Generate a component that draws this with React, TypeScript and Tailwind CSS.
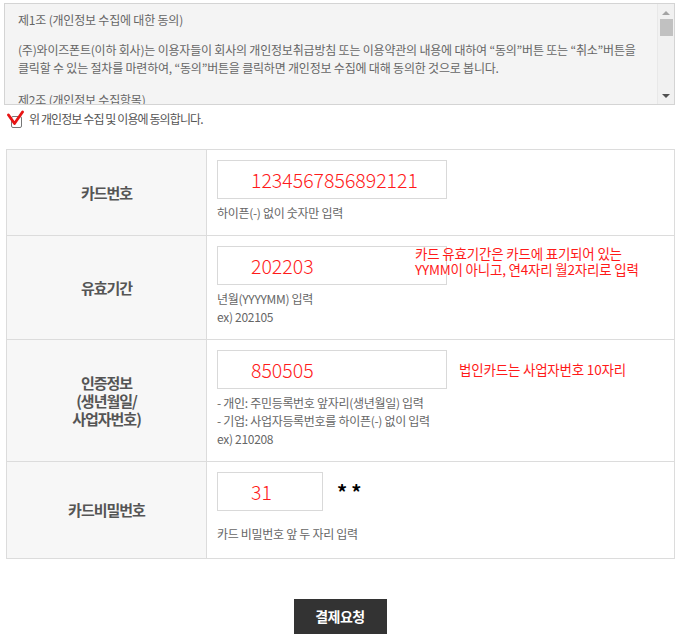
import React from "react";

const font = {
  fontFamily: '"Noto Sans CJK KR", "Noto Sans", sans-serif',
};

const rows = [
  {
    label: ["카드번호"],
    value: "1234567856892121",
    inputW: "w-[230px]",
    help: ["하이픈(-) 없이 숫자만 입력"],
    h: "h-[86px]",
  },
  {
    label: ["유효기간"],
    value: "202203",
    inputW: "w-[230px]",
    help: ["년월(YYYYMM) 입력", "ex) 202105"],
    h: "h-[104px]",
  },
  {
    label: ["인증정보", "(생년월일/", "사업자번호)"],
    value: "850505",
    inputW: "w-[230px]",
    help: [
      "- 개인: 주민등록번호 앞자리(생년월일) 입력",
      "- 기업: 사업자등록번호를 하이픈(-) 없이 입력",
      "ex) 210208",
    ],
    h: "h-[122px]",
  },
  {
    label: ["카드비밀번호"],
    value: "31",
    inputW: "w-[106px]",
    help: ["카드 비밀번호 앞 두 자리 입력"],
    h: "h-[97px]",
  },
];

const App = () => {
  return (
    <div className="w-[685px] h-[643px] bg-white" style={font}>
      {/* agreement box */}
      <div className="pt-[3px] pl-[4px]">
        <div className="w-[671px] h-[102px] border border-[#d4d4d4] bg-[#f4f4f4] flex overflow-hidden">
          <div className="flex-1 pl-[13px] pt-[7px] text-[12px] leading-[18px] text-[#666] tracking-[-0.2px]">
            <p>제1조 (개인정보 수집에 대한 동의)</p>
            <p className="mt-[12px]">
              (주)와이즈폰트(이하 회사)는 이용자들이 회사의 개인정보취급방침 또는 이용약관의 내용에 대하여 “동의”버튼 또는 “취소”버튼을
              <br />
              클릭할 수 있는 절차를 마련하여, “동의”버튼을 클릭하면 개인정보 수집에 대해 동의한 것으로 봅니다.
            </p>
            <p className="mt-[14px]">제2조 (개인정보 수집항목)</p>
          </div>
          <div className="w-[17px] bg-[#f1f1f1] border-l border-[#e8e8e8] flex flex-col items-center">
            <div className="mt-[7px] w-0 h-0 border-l-[4px] border-r-[4px] border-b-[4px] border-l-transparent border-r-transparent border-b-[#a3a3a3]" />
            <div className="mt-[4px] w-[13px] h-[17px] bg-[#c1c1c1]" />
            <div className="mt-auto mb-[6px] w-0 h-0 border-l-[4px] border-r-[4px] border-t-[4px] border-l-transparent border-r-transparent border-t-[#505050]" />
          </div>
        </div>
      </div>

      {/* agree checkbox */}
      <div className="flex items-center pl-[7px] mt-[5px] h-[18px]">
        <svg width="18" height="18" viewBox="0 0 18 18">
          <rect x="4.5" y="6.5" width="10" height="11" rx="1.5" fill="#fff" stroke="#767676" />
          <path d="M1.5 5 L7.5 13.5 L15.5 2" fill="none" stroke="#e81414" strokeWidth="2.8" strokeLinejoin="round" strokeLinecap="round" />
        </svg>
        <span className="ml-[4px] text-[12px] text-[#555] tracking-[-0.9px]">
          위 개인정보 수집 및 이용에 동의합니다.
        </span>
      </div>

      {/* card form */}
      <div className="ml-[6px] mt-[21px] w-[669px] border-t border-[#dcdcdc]">
        {rows.map((row, i) => (
          <div key={i} className={`flex border-b border-x border-[#dcdcdc] ${row.h}`}>
            <div className="w-[200px] shrink-0 bg-[#f7f7f7] border-r border-[#dcdcdc] flex flex-col items-center justify-center text-[15px] font-bold text-[#555] leading-[18px] tracking-[-1px]">
              {row.label.map((l) => (
                <span key={l}>{l}</span>
              ))}
            </div>
            <div className="flex-1 pl-[10px] pt-[10px]">
              <div className="flex items-center">
                <div className="relative">
                  <div
                    className={`${row.inputW} h-[39px] border border-[#d9d9d9] bg-white flex items-center pl-[33px] text-[19.5px] text-[#ff1a1a] font-light`}
                  >
                    {row.value}
                  </div>
                  {i === 1 && (
                    <div className="absolute left-[198px] top-[0px] w-[260px] text-[13.5px] leading-[15.5px] text-[#ff1a1a] tracking-[-0.2px]">
                      카드 유효기간은 카드에 표기되어 있는
                      <br />
                      YYMM이 아니고, 연4자리 월2자리로 입력
                    </div>
                  )}
                </div>
                {i === 2 && (
                  <span className="ml-[12px] text-[13.5px] text-[#ff1a1a] tracking-[-0.2px]">
                    법인카드는 사업자번호 10자리
                  </span>
                )}
                {i === 3 && (
                  <span className="ml-[14px] text-[20px] font-bold text-black tracking-[4px]">
                    **
                  </span>
                )}
              </div>
              <div
                className={`${i === 3 ? "mt-[14px]" : "mt-[5px]"} text-[12px] leading-[18px] text-[#666] tracking-[-0.3px]`}
              >
                {row.help.map((h) => (
                  <p key={h}>{h}</p>
                ))}
              </div>
            </div>
          </div>
        ))}
      </div>

      {/* submit */}
      <div className="flex justify-center mt-[40px]">
        <button className="w-[93px] h-[35px] bg-[#333] text-white text-[14px] font-bold tracking-[-0.5px] ml-[-5px]">
          결제요청
        </button>
      </div>
    </div>
  );
};

export default App;
